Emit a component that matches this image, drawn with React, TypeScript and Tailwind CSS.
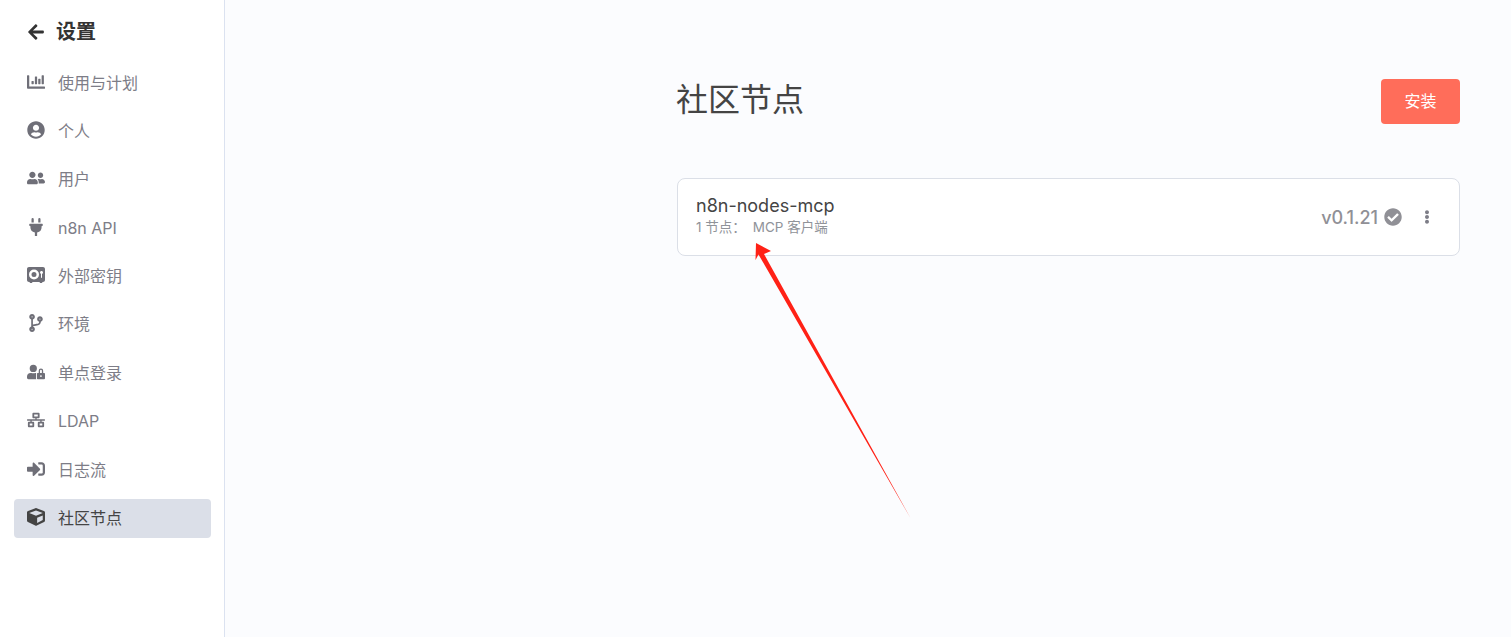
import { FaArrowLeft, FaChartBar, FaCheckCircle, FaCodeBranch, FaCube, FaEllipsisV, FaNetworkWired, FaPlug, FaSignInAlt, FaUserCircle, FaUserFriends, FaUserLock } from 'react-icons/fa'
import { FaVault } from 'react-icons/fa6'

const items = [
  { label: '使用与计划', icon: FaChartBar },
  { label: '个人', icon: FaUserCircle },
  { label: '用户', icon: FaUserFriends },
  { label: 'n8n API', icon: FaPlug },
  { label: '外部密钥', icon: FaVault },
  { label: '环境', icon: FaCodeBranch },
  { label: '单点登录', icon: FaUserLock },
  { label: 'LDAP', icon: FaNetworkWired },
  { label: '日志流', icon: FaSignInAlt },
  { label: '社区节点', icon: FaCube, active: true },
]

export default function App() {
  return (
    <div className="relative flex h-[637px] w-full overflow-hidden bg-[#fbfcfe] font-['Inter','Noto_Sans_CJK_SC',sans-serif] text-[#555]">
      <aside className="flex w-[225px] shrink-0 flex-col border-r border-[#dbe2f0] bg-white pr-[13px] pl-[14px]">
        <div className="flex h-[63px] items-center pl-[13px] text-[#333]">
          <FaArrowLeft size={18} />
          <span className="ml-[11px] text-[20px] font-bold">设置</span>
        </div>
        <nav className="flex flex-col gap-[9.4px]">
          {items.map(({ label, icon: Icon, active }) => (
            <div
              key={label}
              className={`flex h-[39px] items-center rounded-[4px] pl-[13px] text-[16px] ${active ? 'bg-[#dbdfe8] text-[#444]' : 'text-[#7d7d87]'}`}
            >
              <span className={`-mt-[2px] flex w-[18px] justify-center ${active ? 'text-[#444]' : 'text-[#6f6f78]'}`}>
                <Icon size={18} />
              </span>
              <span className="ml-[13px]">{label}</span>
            </div>
          ))}
        </nav>
      </aside>

      <main className="flex flex-1 justify-end pr-[51px]">
        <div className="w-[783px]">
          <div className="flex h-[178px] items-start justify-between pt-[79px]">
            <h1 className="-ml-[1px] text-[32px] leading-[41px] font-normal text-[#444]">社区节点</h1>
            <button className="h-[45px] w-[79px] rounded-[4px] bg-[#ff6d5a] pb-[1px] text-[16px] text-white">安装</button>
          </div>
          <div className="flex h-[78px] items-center justify-between rounded-[8px] border border-[#dbdfe7] bg-white pr-[25px] pl-[18px]">
            <div className="-mt-[5px]">
              <div className="text-[18px] leading-[23px] font-normal text-[#444]">n8n-nodes-mcp</div>
              <div className="mt-[1px] flex text-[13.5px] leading-[18px] text-[#909399]">
                <span>1 节点：</span>
                <span className="ml-[7px]">MCP 客户端</span>
              </div>
            </div>
            <div className="flex items-center text-[#909096]">
              <span className="text-[18px] font-medium">v0.1.21</span>
              <FaCheckCircle size={18} className="ml-[6px]" />
              <FaEllipsisV size={14} className="ml-[18px] text-[#7d7d87]" />
            </div>
          </div>
        </div>
      </main>

      {/* annotation arrow drawn over the page */}
      <svg className="pointer-events-none absolute top-0 left-0" width="1511" height="637">
        <path d="M756 243 L771 251 L764 254 L911 519 L758.5 254.5 L755.5 260 Z" fill="#ff2116" />
      </svg>
    </div>
  )
}
